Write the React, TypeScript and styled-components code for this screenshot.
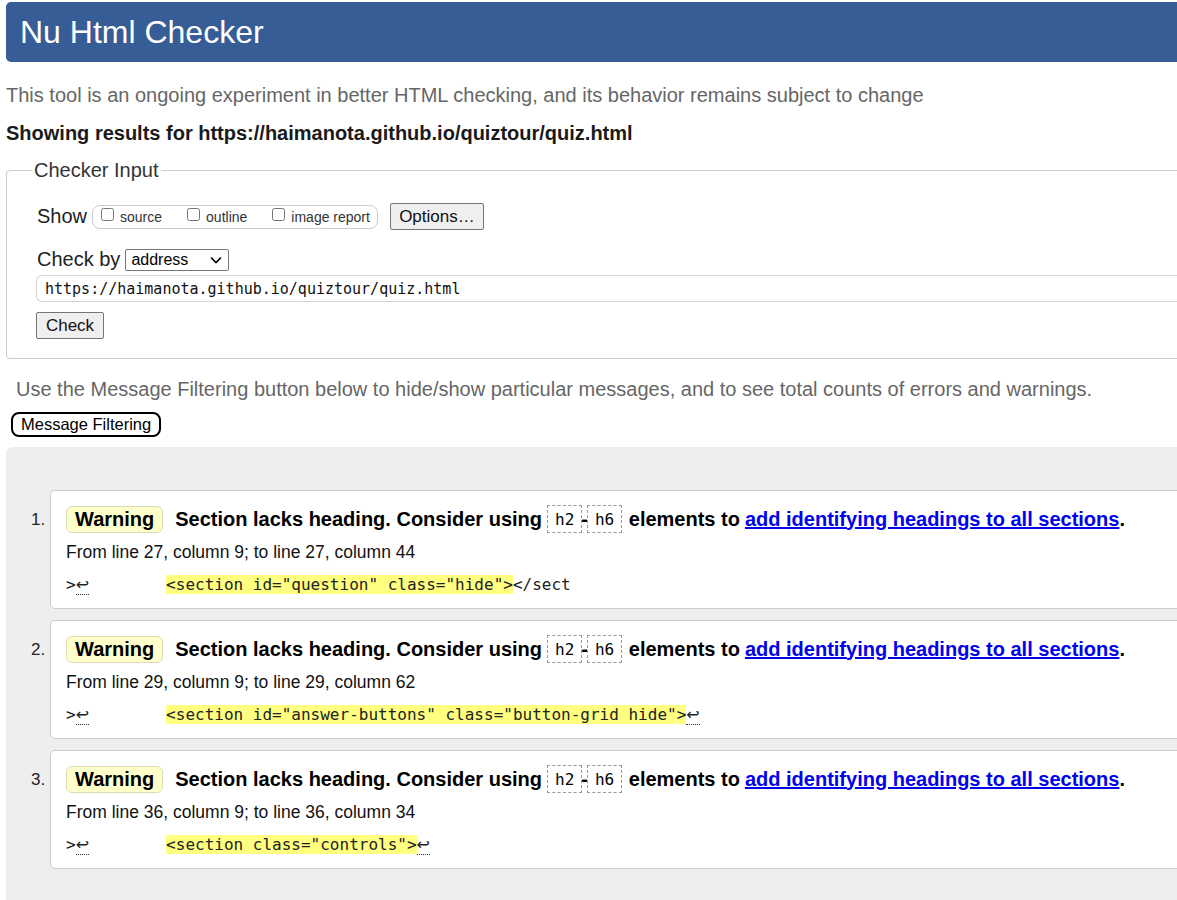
import styled, { createGlobalStyle } from 'styled-components';

const GlobalStyle = createGlobalStyle`
  html, body {
    margin: 0;
    padding: 0;
    overflow: hidden;
    background: #ffffff;
  }
  body {
    font-family: "Liberation Sans", Arial, sans-serif;
    color: #000000;
  }
`;

const Page = styled.div`
  width: 1320px;
  padding: 2px 0 0 6px;
`;

const Header = styled.h1`
  margin: 0;
  height: 60px;
  display: flex;
  align-items: center;
  padding-left: 14px;
  background-color: #365d95;
  color: #ffffff;
  font-size: 32px;
  font-weight: normal;
  border-radius: 5px;
`;

const Intro = styled.p`
  margin: 21px 0 0;
  font-size: 20px;
  line-height: 24px;
  color: #666666;
`;

const Showing = styled.p`
  margin: 14px 0 0;
  font-size: 20px;
  line-height: 24px;
  font-weight: bold;
  color: #1a1a1a;
`;

const Fieldset = styled.fieldset`
  margin: 14px 0 0;
  padding: 21px 0 19px 30px;
  border: 1px solid #cccccc;
  border-radius: 4px;
`;

const Legend = styled.legend`
  padding: 0 2px;
  margin-left: -5px;
  font-size: 20px;
  color: #333333;
`;

const Row = styled.div<{ $mt?: number }>`
  display: flex;
  align-items: center;
  margin-top: ${(p) => p.$mt ?? 0}px;
  font-size: 20px;
  color: #222222;
`;

const Label = styled.span`
  margin-right: 5px;
`;

const Toggles = styled.div`
  display: flex;
  align-items: center;
  height: 22px;
  padding: 0 7px 0 8px;
  border: 1px solid #cccccc;
  border-radius: 8px;
  font-size: 14px;
  color: #333333;
`;

const Toggle = styled.label<{ $gap?: number }>`
  display: flex;
  align-items: center;
  margin-right: ${(p) => p.$gap ?? 0}px;

  input {
    margin: 0 6px 4px 0;
    width: 13px;
    height: 13px;
  }
`;

const NativeButton = styled.button<{ $w: number; $ml?: number }>`
  width: ${(p) => p.$w}px;
  height: 27px;
  margin-left: ${(p) => p.$ml ?? 0}px;
  padding: 0;
  background: #efefef;
  border: 1px solid #767676;
  border-radius: 2px;
  font-family: "Liberation Sans", Arial, sans-serif;
  font-size: 17px;
  color: #111111;
`;

const SelectWrap = styled.span`
  position: relative;
  display: inline-flex;
  margin-left: 5px;
`;

const Select = styled.select`
  appearance: none;
  width: 104px;
  height: 22px;
  padding: 0 0 0 5px;
  border: 1px solid #767676;
  border-radius: 2px;
  background: #ffffff;
  font-family: "Liberation Sans", Arial, sans-serif;
  font-size: 16px;
  color: #000000;
`;

const Chevron = styled.svg`
  position: absolute;
  right: 7px;
  top: 7px;
  pointer-events: none;
`;

const UrlInput = styled.div`
  margin-top: 4px;
  margin-left: -1px;
  height: 25px;
  display: flex;
  align-items: center;
  padding-left: 8px;
  border: 1px solid #d4d4d4;
  border-right: none;
  border-radius: 6px 0 0 6px;
  font-family: "DejaVu Sans Mono", "Liberation Mono", monospace;
  font-size: 15px;
  color: #111111;
`;

const CheckRow = styled.div`
  margin-top: 10px;
  margin-left: -1px;
`;

const FilterNote = styled.p`
  margin: 18px 0 0 10px;
  font-size: 20px;
  line-height: 24px;
  color: #666666;
`;

const FilterButton = styled.button`
  margin: 11px 0 0 5px;
  height: 25px;
  padding: 0 8px;
  background: #ffffff;
  border: 2px solid #000000;
  border-radius: 8px;
  font-family: "Liberation Sans", Arial, sans-serif;
  font-size: 16.5px;
  color: #000000;
`;

const Results = styled.div`
  margin-top: 10px;
  padding: 43px 0 60px;
  background: #eeeeee;
  border-radius: 6px 0 0 0;
`;

const List = styled.ol`
  margin: 0;
  padding: 0 0 0 44px;
  list-style: none;
  display: flex;
  flex-direction: column;
  gap: 11px;
`;

const Item = styled.li`
  position: relative;
  height: 119px;
  box-sizing: border-box;
  padding: 14px 0 0 15px;
  background: #ffffff;
  border: 1px solid #cccccc;
  border-radius: 5px;
`;

const Num = styled.span`
  position: absolute;
  left: -20px;
  top: 19px;
  font-size: 17px;
  color: #222222;
`;

const MessageLine = styled.p`
  margin: 0;
  display: flex;
  align-items: center;
  white-space: nowrap;
  font-size: 20px;
  font-weight: bold;
  color: #000000;
`;

const Badge = styled.span`
  display: inline-flex;
  align-items: center;
  height: 25px;
  padding: 0 8px;
  margin-right: 12px;
  background: #ffffcc;
  border: 1px solid #dcdcb4;
  border-radius: 6px;
`;

const Tag = styled.code<{ $ml?: number; $mr?: number }>`
  display: inline-flex;
  align-items: center;
  height: 28px;
  box-sizing: border-box;
  margin-left: ${(p) => p.$ml ?? 0}px;
  margin-right: ${(p) => p.$mr ?? 0}px;
  padding: 0 7px;
  border: 1px dashed #999999;
  font-family: "DejaVu Sans Mono", "Liberation Mono", monospace;
  font-size: 16px;
  font-weight: normal;
`;

const Dash = styled.span`
  margin: 0 -1px;
`;

const Link = styled.a`
  color: #0000ee;
  text-decoration: underline;
  margin-left: 5px;
`;

const Location = styled.p`
  margin: 9px 0 0;
  font-size: 17.5px;
  line-height: 20px;
  color: #111111;
`;

const Extract = styled.p`
  margin: 13px 0 0;
  font-family: "DejaVu Sans Mono", "Liberation Mono", monospace;
  font-size: 16px;
  line-height: 20px;
  white-space: pre;
  color: #222222;
`;

const Lf = styled.span`
  font-family: "DejaVu Sans", sans-serif;
  font-size: 16px;
  border-bottom: 1px dotted #333333;
`;

const Mark = styled.mark`
  background: #ffff80;
  color: #222222;
`;

type Msg = {
  from: string;
  code: string;
  tail: 'lf' | 'sect';
};

const messages: Msg[] = [
  { from: 'From line 27, column 9; to line 27, column 44', code: '<section id="question" class="hide">', tail: 'sect' },
  { from: 'From line 29, column 9; to line 29, column 62', code: '<section id="answer-buttons" class="button-grid hide">', tail: 'lf' },
  { from: 'From line 36, column 9; to line 36, column 34', code: '<section class="controls">', tail: 'lf' },
];

function App() {
  return (
    <Page>
      <GlobalStyle />
      <Header>Nu Html Checker</Header>
      <Intro>This tool is an ongoing experiment in better HTML checking, and its behavior remains subject to change</Intro>
      <Showing>Showing results for https://haimanota.github.io/quiztour/quiz.html</Showing>

      <Fieldset>
        <Legend>Checker Input</Legend>
        <Row>
          <Label>Show</Label>
          <Toggles>
            <Toggle $gap={25}>
              <input type="checkbox" />
              source
            </Toggle>
            <Toggle $gap={25}>
              <input type="checkbox" />
              outline
            </Toggle>
            <Toggle>
              <input type="checkbox" />
              image report
            </Toggle>
          </Toggles>
          <NativeButton $w={94} $ml={12}>
            Options…
          </NativeButton>
        </Row>
        <Row $mt={18}>
          Check by
          <SelectWrap>
            <Select defaultValue="address">
              <option value="address">address</option>
              <option value="file">file upload</option>
              <option value="text">text input</option>
            </Select>
            <Chevron width="12" height="8" viewBox="0 0 12 8">
              <path d="M1 1.5 L6 6.5 L11 1.5" fill="none" stroke="#000" strokeWidth="1.6" />
            </Chevron>
          </SelectWrap>
        </Row>
        <UrlInput>https://haimanota.github.io/quiztour/quiz.html</UrlInput>
        <CheckRow>
          <NativeButton $w={68}>Check</NativeButton>
        </CheckRow>
      </Fieldset>

      <FilterNote>
        Use the Message Filtering button below to hide/show particular messages, and to see total counts of errors and
        warnings.
      </FilterNote>
      <FilterButton>Message Filtering</FilterButton>

      <Results>
        <List>
          {messages.map((m, i) => (
            <Item key={i}>
              <Num>{i + 1}.</Num>
              <MessageLine>
                <Badge>Warning</Badge>
                Section lacks heading. Consider using<Tag $ml={5}>h2</Tag>
                <Dash>-</Dash>
                <Tag $mr={1}>h6</Tag>&nbsp;elements to
                <Link href="#">add identifying headings to all sections</Link>.
              </MessageLine>
              <Location>{m.from}</Location>
              <Extract>
                {'>'}
                <Lf>↩</Lf>
                {'        '}
                <Mark>{m.code}</Mark>
                {m.tail === 'sect' ? '</sect' : <Lf>↩</Lf>}
              </Extract>
            </Item>
          ))}
        </List>
      </Results>
    </Page>
  );
}

export default App;
